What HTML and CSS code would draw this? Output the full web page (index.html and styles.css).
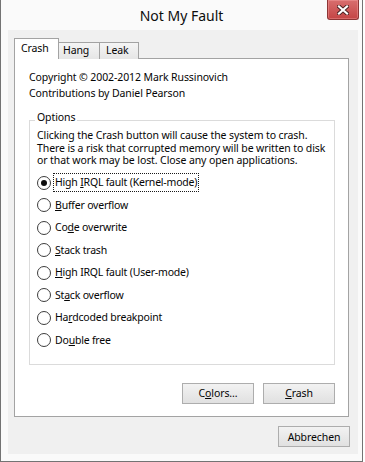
FILE: index.html
```html
<!DOCTYPE html>
<html lang="en">

<head>
  <meta charset="UTF-8" />
  <title>Not My Fault</title>
  <link rel="stylesheet" href="styles.css">
</head>

<body>

  <div class="window">

    <div class="titlebar">
      <span class="title">Not My Fault</span>
      <button class="close" type="button" aria-label="Close">
        <svg width="12" height="10" viewBox="0 0 12 10">
          <path d="M2 1.5 L10 8.5 M10 1.5 L2 8.5" stroke="#4a2020" stroke-width="4" stroke-linecap="square" />
          <path d="M2 1.5 L10 8.5 M10 1.5 L2 8.5" stroke="#fff" stroke-width="2.2" stroke-linecap="square" />
        </svg>
      </button>
    </div>

    <div class="client">

      <div class="tabs">
        <div class="tab active">Crash</div>
        <div class="tab">Hang</div>
        <div class="tab">Leak</div>
      </div>

      <div class="panel">
        <p class="credit">Copyright © 2002-2012 Mark Russinovich</p>
        <p class="credit">Contributions by Daniel Pearson</p>

        <fieldset class="options">
          <legend>Options</legend>
          <p class="warning">Clicking the Crash button will cause the system to crash.<br>
            There is a risk that corrupted memory will be written to disk<br>
            or that work may be lost. Close any open applications.</p>

          <label class="option">
            <input type="radio" name="crash" checked />
            <span class="focus">High <u>I</u>RQL fault (Kernel-mode)</span>
          </label>
          <label class="option">
            <input type="radio" name="crash" />
            <span><u>B</u>uffer overflow</span>
          </label>
          <label class="option">
            <input type="radio" name="crash" />
            <span>Co<u>d</u>e overwrite</span>
          </label>
          <label class="option">
            <input type="radio" name="crash" />
            <span><u>S</u>tack trash</span>
          </label>
          <label class="option">
            <input type="radio" name="crash" />
            <span><u>H</u>igh IRQL fault (User-mode)</span>
          </label>
          <label class="option">
            <input type="radio" name="crash" />
            <span>St<u>a</u>ck overflow</span>
          </label>
          <label class="option">
            <input type="radio" name="crash" />
            <span>Ha<u>r</u>dcoded breakpoint</span>
          </label>
          <label class="option">
            <input type="radio" name="crash" />
            <span>Do<u>u</u>ble free</span>
          </label>
        </fieldset>

        <div class="actions">
          <button class="btn" type="button">C<u>o</u>lors...</button>
          <button class="btn" type="button"><u>C</u>rash</button>
        </div>
      </div>

      <div class="footer">
        <button class="btn" type="button">Abbrechen</button>
      </div>

    </div>

  </div>

</body>

</html>
```

FILE: styles.css
```css
* {
  box-sizing: border-box;
  margin: 0;
  padding: 0;
}
:root {
  --ui-font: "Noto Sans", "Liberation Sans", sans-serif;
  --text: hsl(0, 0%, 2%);
  --frame: hsl(0, 0%, 98%);
  --face: hsl(0, 0%, 94%);
  --edge: hsl(0, 0%, 64%);
}
body {
  background-color: hsl(0, 0%, 100%);
  color: var(--text);
  font: 10.5px/16px var(--ui-font);
  letter-spacing: -0.1px;
}
u {
  text-decoration-thickness: 1px;
  text-underline-offset: 1px;
}

/* Window frame */
.window {
  background-color: var(--frame);
  border: 1px solid hsl(0, 0%, 45%);
  border-top: 0;
  display: flex;
  flex-direction: column;
  width: 363px;
  height: 462px;
}
.titlebar {
  display: flex;
  align-items: center;
  justify-content: center;
  height: 30px;
  position: relative;
}
.title {
  color: hsl(0, 0%, 5%);
  font-size: 14px;
  letter-spacing: 0;
  padding-top: 1px;
}
.close {
  align-items: center;
  background: linear-gradient(hsl(0, 58%, 64%), hsl(0, 52%, 52%));
  border: 1px solid hsl(0, 45%, 38%);
  border-top: 0;
  border-radius: 0 0 3px 3px;
  box-shadow: inset 0 0 0 1px hsla(0, 100%, 85%, 0.35);
  display: flex;
  justify-content: center;
  position: absolute;
  top: 0;
  right: 3px;
  width: 32px;
  height: 20px;
}

/* Client area */
.client {
  background-color: var(--face);
  display: flex;
  flex: 1;
  flex-direction: column;
  margin: 0 4px 7px 7px;
  padding: 8px 0 0 6px;
}
.tabs {
  align-items: flex-end;
  display: flex;
  height: 21px;
  margin-bottom: -1px;
  position: relative;
  z-index: 1;
}
.tab {
  background: linear-gradient(hsl(0, 0%, 96%), hsl(0, 0%, 90%));
  border: 1px solid var(--edge);
  border-bottom: 0;
  height: 17px;
  line-height: 15px;
  padding-left: 4px;
}
.tab:nth-child(2) {
  border-left: 0;
  width: 41px;
}
.tab:nth-child(3) {
  border-left: 0;
  width: 39px;
  padding-left: 6px;
}
.tab.active {
  background: hsl(0, 0%, 100%);
  height: 21px;
  line-height: 19px;
  padding-left: 6px;
  width: 45px;
}

.panel {
  background-color: hsl(0, 0%, 100%);
  border: 1px solid var(--edge);
  padding: 10px 13px 0 14px;
  width: 335px;
  height: 359px;
}
.credit {
  line-height: 16px;
}

/* Group box */
.options {
  border: 1px solid hsl(0, 0%, 86%);
  margin-top: 8px;
  padding: 0 7px 12px;
}
.options legend {
  line-height: 16px;
  margin-left: -2px;
  padding: 0 2px 6px;
}
.warning {
  line-height: 12.5px;
  margin-top: -2px;
  white-space: nowrap;
}
.option {
  align-items: center;
  display: flex;
  height: 22.5px;
  letter-spacing: -0.2px;
}
.option:first-of-type {
  margin-top: 5px;
}
.option input[type="radio"] {
  appearance: none;
  -webkit-appearance: none;
  background-color: hsl(0, 0%, 100%);
  border: 1px solid hsl(0, 0%, 24%);
  border-radius: 50%;
  flex-shrink: 0;
  margin-inline-end: 2px;
  position: relative;
  width: 14px;
  height: 14px;
}
.option input[type="radio"]:checked:after {
  background-color: hsl(0, 0%, 5%);
  border-radius: 50%;
  content: "";
  position: absolute;
  top: 3px;
  left: 3px;
  width: 6px;
  height: 6px;
}
.option span {
  border: 1px dotted transparent;
  line-height: 17px;
  padding: 0 1px;
}
.option .focus {
  border-color: hsl(0, 0%, 10%);
}

/* Buttons */
.btn {
  background: linear-gradient(hsl(0, 0%, 95%), hsl(0, 0%, 88%));
  border: 1px solid hsl(0, 0%, 68%);
  color: var(--text);
  font: inherit;
  letter-spacing: inherit;
  width: 72px;
  height: 21px;
}
.actions {
  display: flex;
  gap: 9px;
  justify-content: flex-end;
  margin-top: 18px;
}
.footer {
  display: flex;
  justify-content: flex-end;
  margin-top: 9px;
  padding-right: 8px;
}
```
